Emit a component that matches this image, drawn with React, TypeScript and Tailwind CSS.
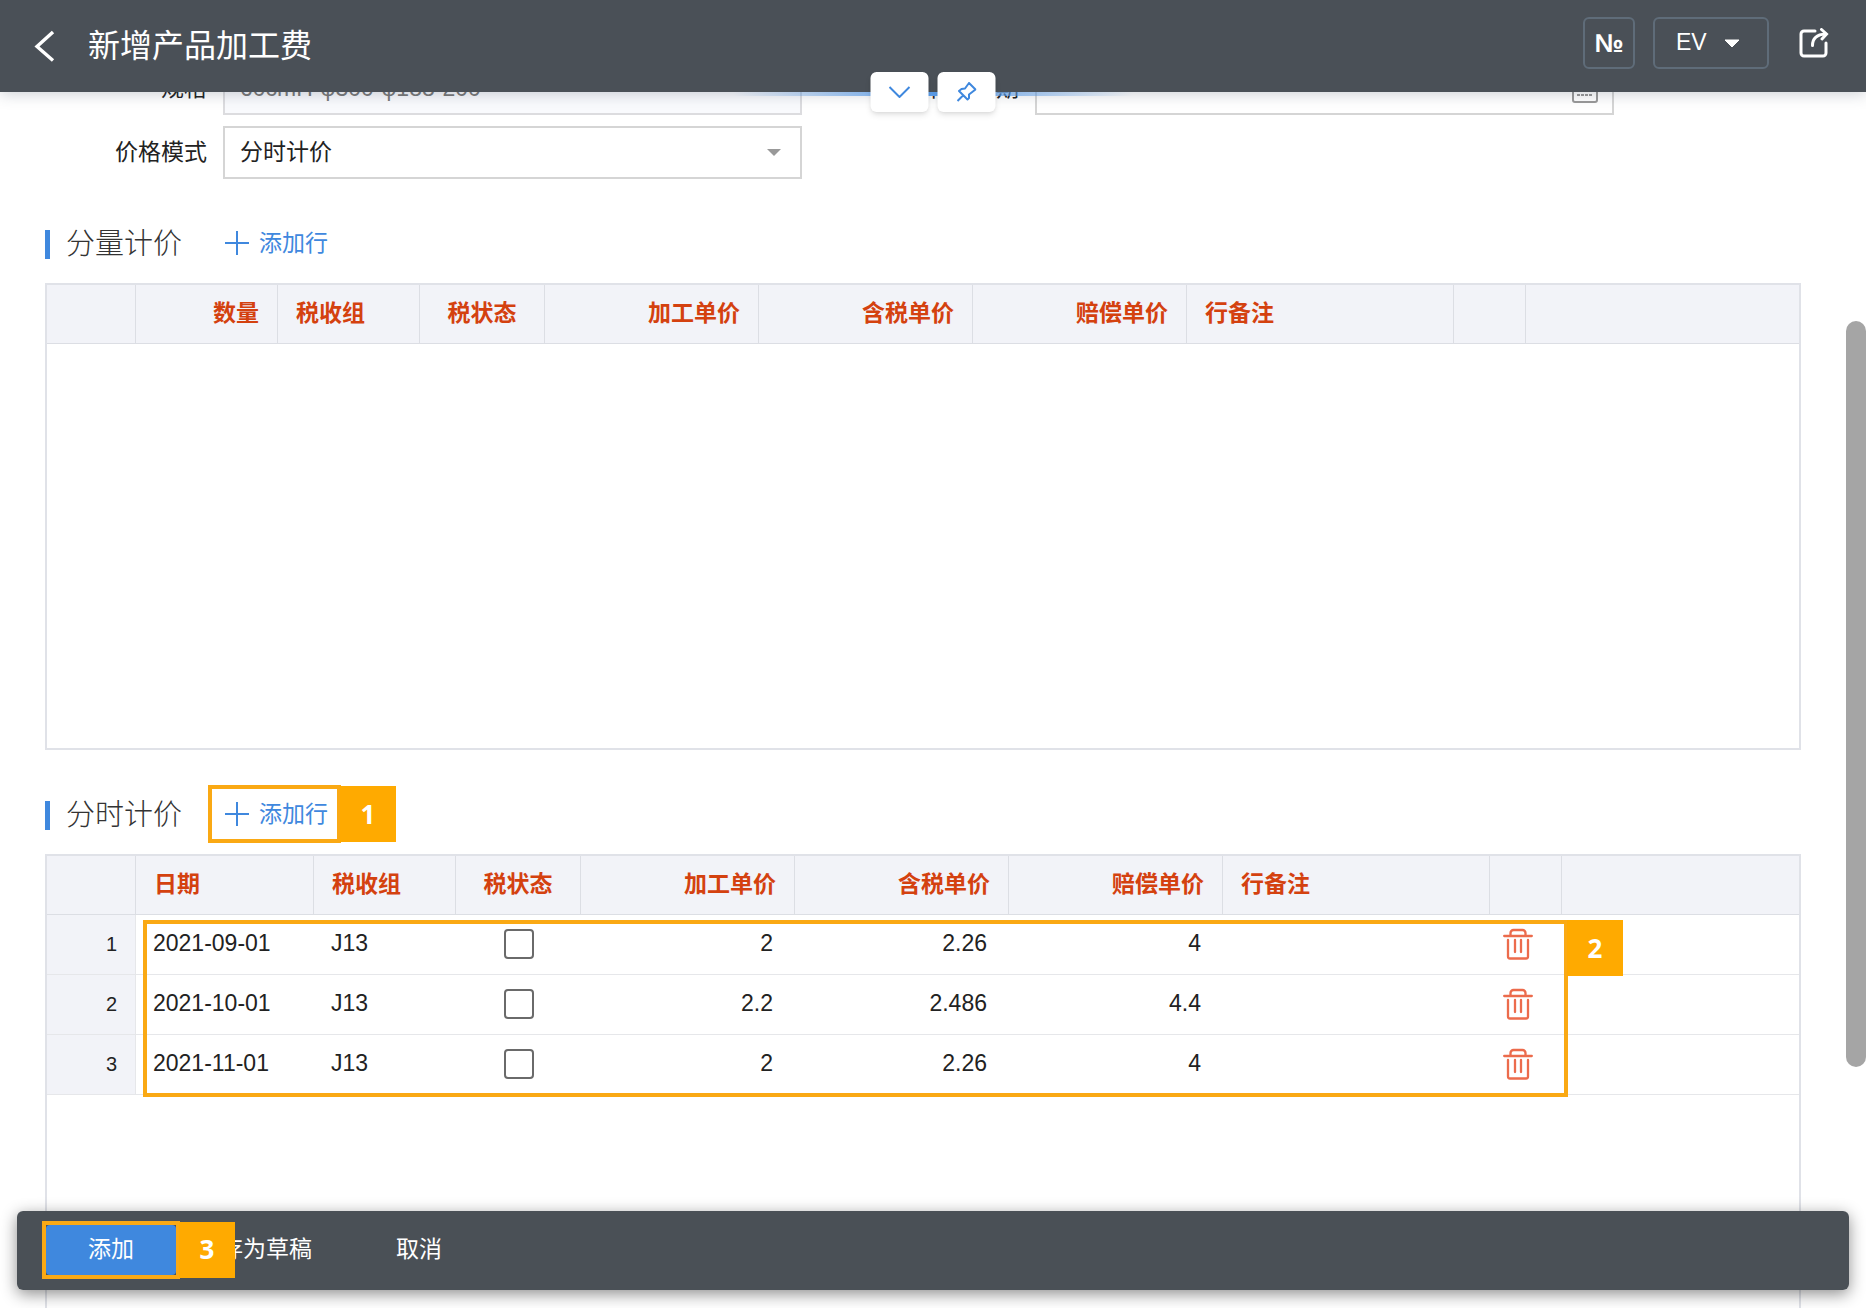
import React, { useState } from 'react'

type Column = {
  title: string
  width: string
  align: string
}

type Row = {
  date: string
  taxGroup: string
  price: string
  taxedPrice: string
  compensation: string
}

const sharedColumns: Column[] = [
  { title: '税收组', width: 'w-[142px]', align: 'text-left' },
  { title: '税状态', width: 'w-[125px]', align: 'text-center' },
  { title: '加工单价', width: 'w-[214px]', align: 'text-right' },
  { title: '含税单价', width: 'w-[214px]', align: 'text-right' },
  { title: '赔偿单价', width: 'w-[214px]', align: 'text-right' },
  { title: '行备注', width: 'w-[267px]', align: 'text-left' },
  { title: '', width: 'w-[72px]', align: 'text-left' },
  { title: '', width: '', align: 'text-left' },
]

const quantityColumns: Column[] = [
  { title: '', width: 'w-[89px]', align: 'text-left' },
  { title: '数量', width: 'w-[142px]', align: 'text-right' },
  ...sharedColumns,
]

const timeColumns: Column[] = [
  { title: '', width: 'w-[89px]', align: 'text-left' },
  { title: '日期', width: 'w-[178px]', align: 'text-left' },
  ...sharedColumns,
]

const emptyRow: Row = { date: '', taxGroup: '', price: '', taxedPrice: '', compensation: '' }

const initialRows: Row[] = [
  { date: '2021-09-01', taxGroup: 'J13', price: '2', taxedPrice: '2.26', compensation: '4' },
  { date: '2021-10-01', taxGroup: 'J13', price: '2.2', taxedPrice: '2.486', compensation: '4.4' },
  { date: '2021-11-01', taxGroup: 'J13', price: '2', taxedPrice: '2.26', compensation: '4' },
]

function TrashIcon() {
  return (
    <svg width="30" height="32" viewBox="0 0 30 32" fill="none" stroke="#ec6b4c" strokeWidth="2.3" strokeLinecap="round">
      <path d="M1.200 8h27.600M7.500 7.500V5a3 3 0 0 1 3-3h9a3 3 0 0 1 3 3v2.500" />
      <path d="M5 12v16.500a2 2 0 0 0 2 2h16a2 2 0 0 0 2-2V12M12 12v12M18 12v12" />
    </svg>
  )
}

function Badge({ children }: { children: React.ReactNode }) {
  return (
    <span className="ml-[3px] flex h-14 w-14 items-center justify-center bg-[#ffaa00] font-['Open_Sans',sans-serif] text-[26px] font-bold text-white">
      {children}
    </span>
  )
}

function SectionTitle({ title, onAdd, step }: { title: string; onAdd: () => void; step?: string }) {
  return (
    <div className="flex h-14 items-center">
      <div className="flex items-center pt-0.5">
        <span className="h-[29px] w-[5px] bg-[#3f88de]" />
        <h2 className="ml-4 text-[29px] leading-none font-light text-[#333]">{title}</h2>
      </div>
      <div className="relative ml-[26px]">
        <button onClick={onAdd} className="flex h-14 items-center gap-[9px] px-4 text-[23px] text-[#3f88de]">
          <svg width="26" height="26" viewBox="0 0 26 26" stroke="currentColor" strokeWidth="2">
            <path d="M13 1v24M1 13h24" />
          </svg>
          添加行
        </button>
        {step && (
          <div className="pointer-events-none absolute -inset-y-px left-0 right-[3px] border-4 border-[#faa914]">
            <div className="absolute -top-[3px] left-full">
              <Badge>{step}</Badge>
            </div>
          </div>
        )}
      </div>
    </div>
  )
}

function TableHead({ columns }: { columns: Column[] }) {
  return (
    <thead>
      <tr className="h-[59px] bg-[#f2f3f8]">
        {columns.map((col, i) => (
          <th
            key={i}
            className={`border-b border-r border-[#dcdee4] px-[18px] pb-0.5 text-[23px] font-bold text-[#d4410f] last:border-r-0 ${col.width} ${col.align}`}
          >
            {col.title}
          </th>
        ))}
      </tr>
    </thead>
  )
}

export default function App() {
  const [quantityRows, setQuantityRows] = useState<Row[]>([])
  const [rows, setRows] = useState<Row[]>(initialRows)

  const removeRow = (index: number) => {
    setRows(rows.filter((_, i) => i !== index))
  }

  return (
    <div className="relative flex h-screen flex-col overflow-hidden bg-white font-['Liberation_Sans','Noto_Sans_CJK_SC',sans-serif] text-[23px] text-[#222]">
      <header className="relative z-10 flex h-[92px] shrink-0 items-center bg-[#4a5057] pl-[33px] pr-[37px] text-white shadow-[0_2px_14px_rgba(60,70,90,0.25)]">
        <button aria-label="返回">
          <svg width="22" height="32" viewBox="0 0 22 32" fill="none" stroke="currentColor" strokeWidth="3.4">
            <path d="M20 2L4 16.500l16 14" />
          </svg>
        </button>
        <h1 className="ml-[33px] text-[32px] leading-none">新增产品加工费</h1>
        <div className="mb-1.5 ml-auto flex items-center">
          <button className="flex h-[52px] w-[52px] items-center justify-center rounded-md border-2 border-[#5f6c79] text-[26px] font-bold">№</button>
          <div className="relative ml-[18px]">
            <select aria-label="EV" className="h-[52px] w-[116px] appearance-none rounded-md border-2 border-[#5f6c79] pb-0.5 pl-[21px] text-[23px]">
              <option>EV</option>
            </select>
            <svg className="pointer-events-none absolute right-[29px] top-[22px]" width="16" height="9" viewBox="0 0 16 9" fill="currentColor" stroke="currentColor" strokeLinejoin="round">
              <path d="M1 1h14L8 8z" />
            </svg>
          </div>
          <button aria-label="分享" className="ml-[30px]">
            <svg width="30" height="30" viewBox="0 0 30 30" fill="none" stroke="currentColor" strokeWidth="3" strokeLinecap="round">
              <path d="M16 3H5a3 3 0 0 0-3 3v19a3 3 0 0 0 3 3h19a3 3 0 0 0 3-3V15" />
              <path d="M13.500 17.500c0-7 4-11 13-11.500" />
              <path d="M22.500 1.500L27.500 6l-4.500 5" />
            </svg>
          </button>
        </div>
        <div className="absolute left-1/2 top-full h-1 w-[400px] -translate-x-1/2 bg-linear-to-r from-transparent via-[#5b9be6] to-transparent" />
        <div className="absolute -bottom-5 left-1/2 flex -translate-x-1/2 gap-[9px]">
          <button aria-label="展开" className="flex h-10 w-[58px] items-center justify-center rounded-md bg-white text-[#3f88de] shadow-md">
            <svg width="22" height="12" viewBox="0 0 22 12" fill="none" stroke="currentColor" strokeWidth="2">
              <path d="M1 1l10 10L21 1" />
            </svg>
          </button>
          <button aria-label="固定" className="flex h-10 w-[58px] items-center justify-center rounded-md bg-white text-[#3f88de] shadow-md">
            <svg width="20" height="20" viewBox="0 0 20 20" fill="none" stroke="currentColor" strokeWidth="2" strokeLinejoin="round">
              <path d="M1 19l6-6M2.500 9l8.500 8.500 1.500-1.500v-3.500L19 7.500 12.500 1 8.500 6.500 5 7z" />
            </svg>
          </button>
        </div>
      </header>

      <main className="min-h-0 flex-1 overflow-hidden pl-[45px] pr-[65px]">
        <div className="-mt-[30px] grid grid-cols-[162px_579px_201px_579px] gap-x-4 gap-y-[11px]">
          <label htmlFor="spec" className="flex items-center justify-end">规格</label>
          <input id="spec" disabled defaultValue="60cmH-φ300-φ188-200" className="h-[53px] border-2 border-[#dcdcdf] bg-[#f9fafd] px-[15px] text-[#777]" />
          <label htmlFor="valid" className="flex items-center justify-end">有效日期</label>
          <div className="relative">
            <input id="valid" className="h-[53px] w-full border-2 border-[#d5d5d5] px-[15px]" />
            <svg className="pointer-events-none absolute right-4 top-[15px]" width="26" height="26" viewBox="0 0 26 26" fill="none" stroke="#999" strokeWidth="2">
              <rect x="1" y="3" width="24" height="22" rx="2" />
              <path d="M1 9h24M7 0v6M19 0v6" />
              <path d="M5 14h16M5 18h16" strokeDasharray="3 1" />
            </svg>
          </div>
          <label htmlFor="mode" className="flex items-center justify-end">价格模式</label>
          <div className="relative">
            <select id="mode" className="h-[53px] w-full appearance-none border-2 border-[#d5d5d5] px-[15px]">
              <option>分时计价</option>
            </select>
            <svg className="pointer-events-none absolute right-[21px] top-[23px]" width="14" height="7" viewBox="0 0 14 7" fill="#999">
              <path d="M0 0h14L7 7z" />
            </svg>
          </div>
        </div>

        <section className="mt-9">
          <SectionTitle title="分量计价" onAdd={() => setQuantityRows([...quantityRows, emptyRow])} />
          <div className="mt-3 h-[467px] overflow-auto border-2 border-[#e0e2e8]">
            <table className="w-full table-fixed border-separate border-spacing-0">
              <TableHead columns={quantityColumns} />
              <tbody>
                {quantityRows.map((_, i) => (
                  <tr key={i} className="h-[60px] *:border-b *:border-[#e6e7ea]">
                    <td className="border-r bg-[#f2f3f8] pr-[18px] text-right text-xl">{i + 1}</td>
                    <td colSpan={9}></td>
                  </tr>
                ))}
              </tbody>
            </table>
          </div>
        </section>

        <section className="mt-9">
          <SectionTitle title="分时计价" onAdd={() => setRows([...rows, emptyRow])} step="1" />
          <div className="relative mt-3 min-h-[520px] border-2 border-[#e0e2e8]">
            <table className="w-full table-fixed border-separate border-spacing-0">
              <TableHead columns={timeColumns} />
              <tbody>
                {rows.map((row, i) => (
                  <tr key={i} className="h-[60px] *:border-b *:border-[#e6e7ea] *:pb-0.5">
                    <td className="border-r bg-[#f2f3f8] pr-[18px] text-right text-xl">{i + 1}</td>
                    <td className="px-[17px]">{row.date}</td>
                    <td className="px-[17px]">{row.taxGroup}</td>
                    <td>
                      <input
                        type="checkbox"
                        aria-label="税状态"
                        className="mx-auto block h-[30px] w-[30px] appearance-none rounded border-2 border-[#6a6a6a] checked:bg-[#3f88de]"
                      />
                    </td>
                    <td className="px-[22px] text-right">{row.price}</td>
                    <td className="px-[22px] text-right">{row.taxedPrice}</td>
                    <td className="px-[22px] text-right">{row.compensation}</td>
                    <td></td>
                    <td className="pl-[13px]">
                      <button aria-label="删除" className="block" onClick={() => removeRow(i)}>
                        <TrashIcon />
                      </button>
                    </td>
                    <td></td>
                  </tr>
                ))}
              </tbody>
            </table>
            <div className="pointer-events-none absolute left-24 top-16 h-[177px] w-[1425px] border-4 border-[#faa914]">
              <div className="absolute -top-1 left-full">
                <Badge>2</Badge>
              </div>
            </div>
          </div>
        </section>
      </main>

      <footer className="absolute inset-x-[17px] bottom-[18px] z-10 flex h-[79px] items-center rounded-md bg-[#464c53]/98 pb-0.5 pl-[29px] text-white shadow-[0_4px_16px_rgba(0,0,0,0.45)]">
        <div className="relative">
          <button className="block h-[50px] rounded bg-[#3f88de] px-[42px]">添加</button>
          <div className="pointer-events-none absolute -inset-1 border-4 border-[#faa914]">
            <div className="absolute -top-[3px] left-full">
              <Badge>3</Badge>
            </div>
          </div>
        </div>
        <button className="h-[50px] px-11">存为草稿</button>
        <button className="h-[50px] px-10">取消</button>
      </footer>

      <div className="absolute right-0 top-[321px] h-[746px] w-5 rounded-full bg-[#a5a5a5]" />
    </div>
  )
}
